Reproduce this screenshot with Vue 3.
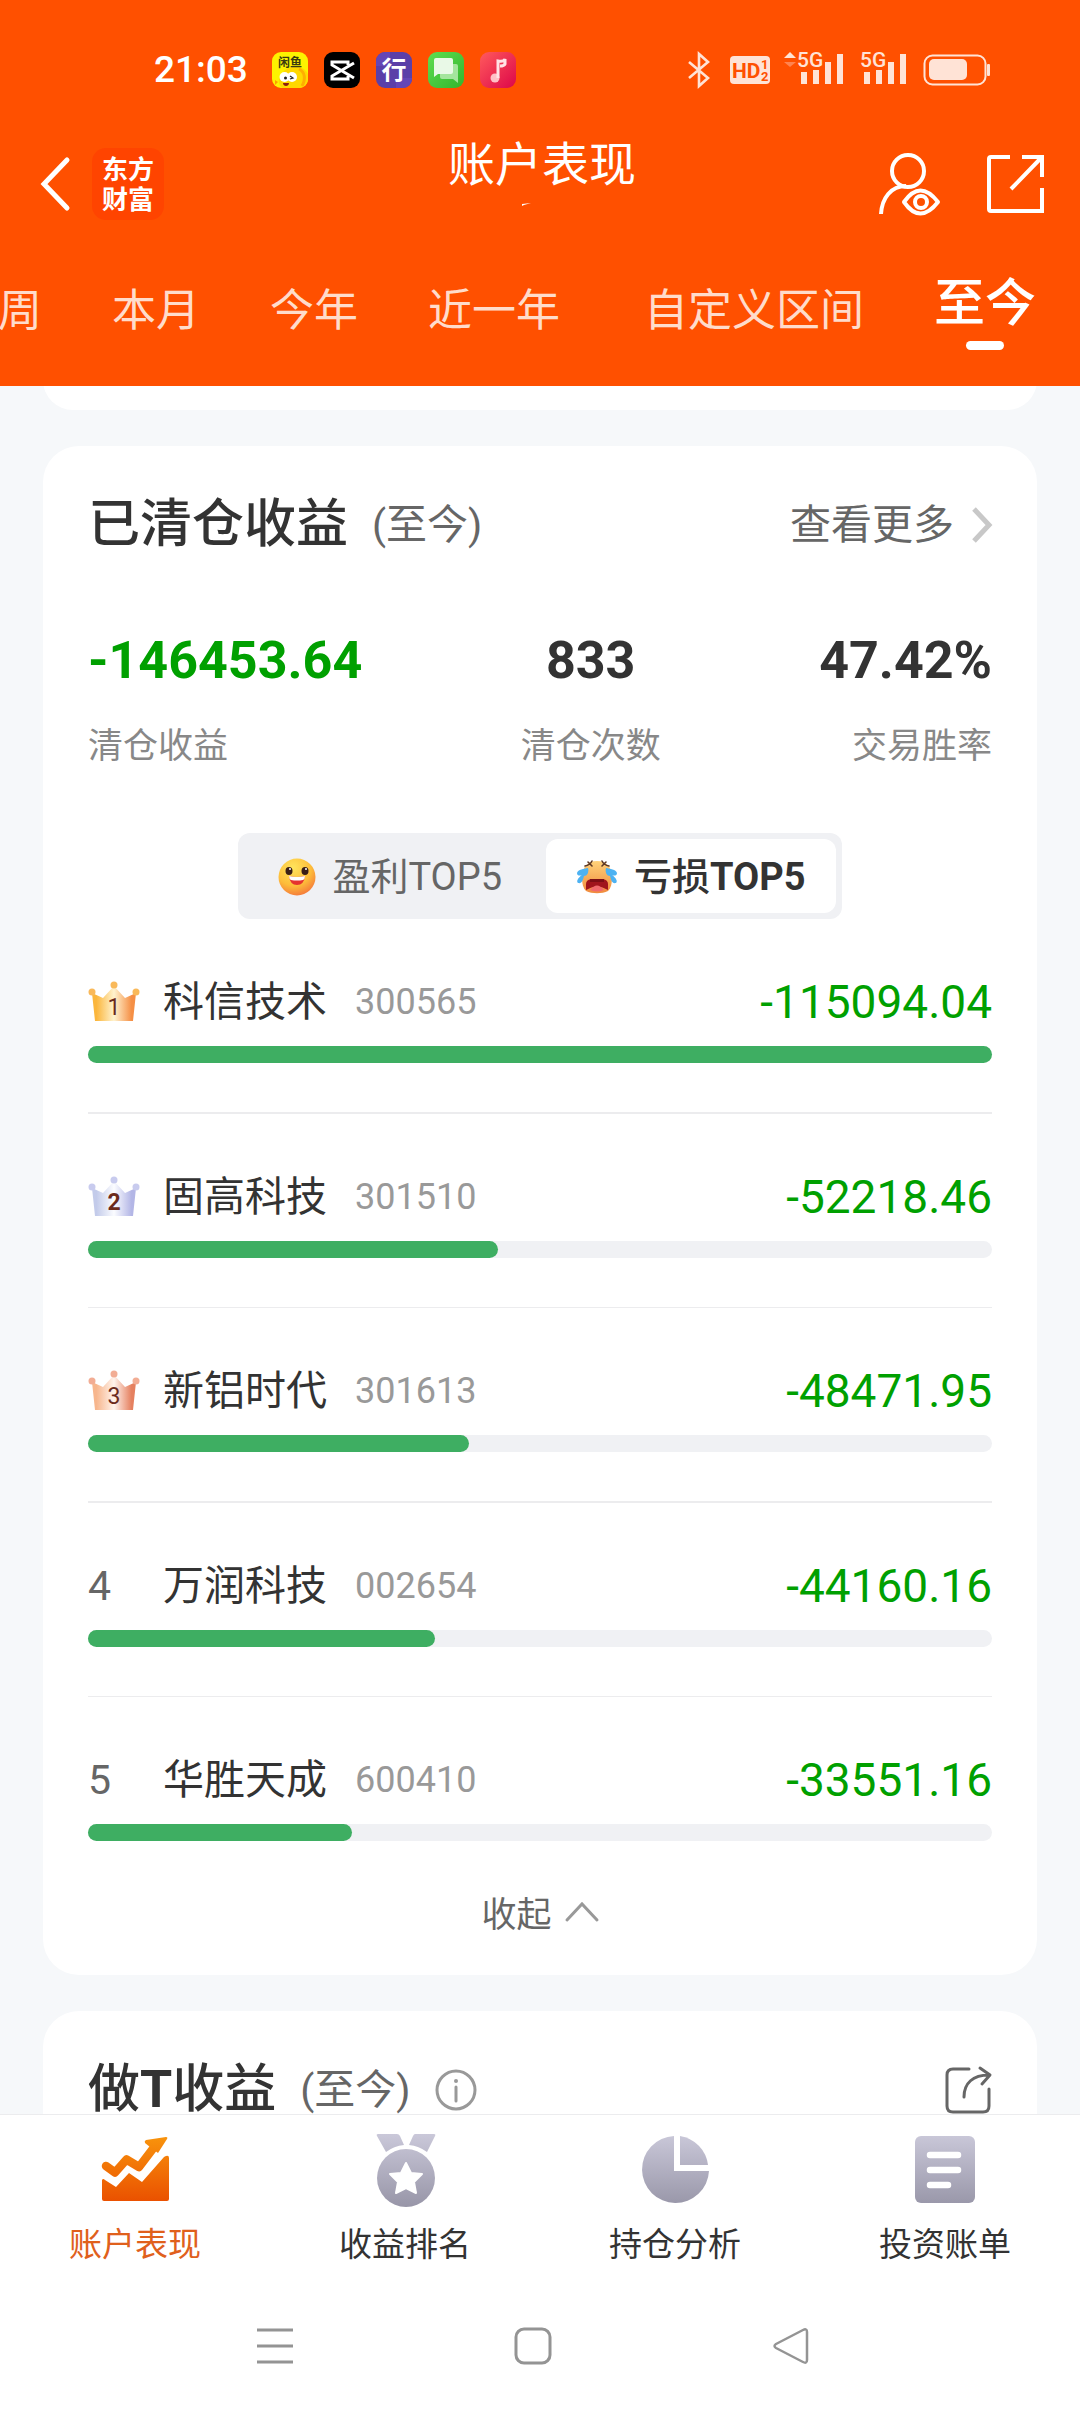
<script setup>
import { ref, computed } from 'vue'

const ranges = [
  { key: 'week', label: '本周' },
  { key: 'month', label: '本月' },
  { key: 'year', label: '今年' },
  { key: 'last', label: '近一年' },
  { key: 'custom', label: '自定义区间' },
  { key: 'all', label: '至今' },
]
const range = ref('all')

const stats = [
  { label: '清仓收益', value: '-146453.64', loss: true },
  { label: '清仓次数', value: '833' },
  { label: '交易胜率', value: '47.42%' },
]

const board = ref('loss')

const losses = [
  { name: '科信技术', code: '300565', amount: -115094.04 },
  { name: '固高科技', code: '301510', amount: -52218.46 },
  { name: '新铝时代', code: '301613', amount: -48471.95 },
  { name: '万润科技', code: '002654', amount: -44160.16 },
  { name: '华胜天成', code: '600410', amount: -33551.16 },
]
const rows = computed(() =>
  losses.map((s, i) => ({
    ...s,
    rank: i + 1,
    text: s.amount.toFixed(2),
    share: (s.amount / losses[0].amount) * 100,
  }))
)

const crowns = [
  { edge: '#fbb63c', mid: '#fff3cf', end: '#f58f45', dot: '#f9b95a' },
  { edge: '#c3cbea', mid: '#fbfcff', end: '#b3b6e6', dot: '#c8cbee' },
  { edge: '#f7b68d', mid: '#fff3ec', end: '#e5805f', dot: '#f2ad94' },
]

const pages = [
  { key: 'performance', label: '账户表现' },
  { key: 'rank', label: '收益排名' },
  { key: 'holding', label: '持仓分析' },
  { key: 'bill', label: '投资账单' },
]
const page = ref('performance')
</script>

<template>
  <div class="app">
    <header class="top">
      <div class="status">
        <div class="status-left">
          <span class="clock">21:03</span>
          <svg class="app-icon" viewBox="0 0 36 36" aria-hidden="true">
            <rect width="36" height="36" rx="9" fill="#fdf200" />
            <path d="M36 22c-2-4-6-7-10-7-9-2-17 5-19 12-1 4 1 7 3 9h17c5 0 9-4 9-9z" fill="#ffd800" />
            <path d="M27 17c6 3 7 10 3 17" fill="none" stroke="#ffae00" stroke-width="3" />
            <path d="M3 28l3 2-3 3z" fill="#ff9d00" />
            <circle cx="12.500" cy="25" r="5" fill="#fff" />
            <circle cx="20" cy="25" r="5" fill="#fff" />
            <circle cx="13.500" cy="26" r="1.500" fill="#222" />
            <path d="M18 24l3 2-3 1" fill="none" stroke="#222" stroke-width="1.200" />
            <path d="M11 31h6c0 4-6 4-6 0z" fill="#8d1d10" />
            <text x="18" y="15" text-anchor="middle" font-size="12" font-weight="700" fill="#3a3a10">闲鱼</text>
          </svg>
          <svg class="app-icon" viewBox="0 0 36 36" aria-hidden="true">
            <rect width="36" height="36" rx="9" fill="#000" />
            <path d="M30 11L8 24v3h16v-3M30 26L8 13v-3h16v3" fill="none" stroke="#fff" stroke-width="3" />
          </svg>
          <svg class="app-icon" viewBox="0 0 36 36" aria-hidden="true">
            <rect width="36" height="36" rx="9" fill="#5b3fa8" />
            <path d="M0 14h14V0H9a9 9 0 0 0-9 9zM20 26h16v1a9 9 0 0 1-9 9h-7z" fill="#6546b6" />
            <text x="18" y="27" text-anchor="middle" font-size="25" font-weight="700" fill="#fff">行</text>
          </svg>
          <svg class="app-icon" viewBox="0 0 36 36" aria-hidden="true">
            <defs>
              <linearGradient id="msg" x1="0" y1="0" x2="1" y2="1">
                <stop offset="0" stop-color="#5fdd51" /><stop offset="1" stop-color="#33b52d" />
              </linearGradient>
            </defs>
            <rect width="36" height="36" rx="9" fill="url(#msg)" />
            <path d="M14 12h14q2 0 2 2v17l-5-4H14q-2 0-2-2V14q0-2 2-2z" fill="#a4e59d" />
            <path d="M8 6h15q2 0 2 2v12q0 2-2 2H10l-4 3V8q0-2 2-2z" fill="#e9f9e7" />
          </svg>
          <svg class="app-icon" viewBox="0 0 36 36" aria-hidden="true">
            <defs>
              <linearGradient id="music" x1="0" y1="0" x2="1" y2="1">
                <stop offset="0" stop-color="#ff5a5c" /><stop offset="1" stop-color="#dd0649" />
              </linearGradient>
            </defs>
            <rect width="36" height="36" rx="9" fill="url(#music)" />
            <circle cx="15" cy="26" r="4.500" fill="#ffc1c6" />
            <path d="M18 26V9q6 1 7-2v5q-1 2-5 2" fill="none" stroke="#ffe3e5" stroke-width="3" />
          </svg>
        </div>
        <svg class="signals" viewBox="0 0 304 36" aria-label="5G 信号">
          <g fill="none" stroke="#ffe3d6" stroke-width="2.600">
            <path d="M1 10l19 16-9 8V2l9 8L1 26" />
            <rect x="236.500" y="3.500" width="61" height="29" rx="8" stroke-width="2" />
          </g>
          <g fill="#ffe3d6">
            <rect x="42" y="4" width="40" height="28" rx="4" />
            <path d="M96 6l6-6 6 6z" />
            <rect x="113" y="20" width="6" height="12" /><rect x="125" y="18" width="6" height="14" />
            <rect x="137" y="10" width="6" height="22" /><rect x="149" y="2" width="6" height="30" />
            <rect x="176" y="20" width="6" height="12" /><rect x="188" y="18" width="6" height="14" />
            <rect x="200" y="10" width="6" height="22" /><rect x="212" y="2" width="6" height="30" />
            <rect x="241" y="7" width="38" height="21" rx="5" />
            <rect x="299" y="12" width="3" height="12" rx="1" />
            <text x="109" y="15" font-size="21" font-weight="500">5G</text>
            <text x="172" y="15" font-size="21" font-weight="500">5G</text>
          </g>
          <path d="M96 10l6 5 6-5z" fill="#ff8450" />
          <g fill="#ff5000" font-weight="700">
            <text x="44" y="26" font-size="21">HD</text>
            <text x="73" y="17" font-size="13">1</text>
            <text x="73" y="29" font-size="13">2</text>
          </g>
        </svg>
      </div>

      <nav class="nav">
        <div class="nav-left">
          <button class="icon-btn" aria-label="返回">
            <svg width="32" height="56" viewBox="0 0 32 56" fill="none" stroke="#fff" stroke-width="5" stroke-linecap="round">
              <path d="M27 4L4 28l23 24" />
            </svg>
          </button>
          <a class="logo" href="#home">东方<br>财富</a>
        </div>
        <div class="title-box">
          <h1 class="title">账户表现</h1>
          <svg class="tick" viewBox="0 0 10 4" aria-hidden="true"><path d="M0 1l9-1-7 2-2 1z" fill="#fff" /></svg>
        </div>
        <div class="nav-right">
          <button class="icon-btn" aria-label="账户查看">
            <svg width="64" height="64" viewBox="0 0 64 64" fill="none" stroke="#fff" stroke-width="4">
              <circle cx="31" cy="19" r="16" />
              <path d="M4 62C5 46 14 34 29 34" />
              <path d="M27 50q16-23 34 0q-18 23-34 0z" stroke-linejoin="round" />
              <circle cx="44" cy="50" r="6" />
            </svg>
          </button>
          <button class="icon-btn" aria-label="分享">
            <svg width="58" height="60" viewBox="0 0 58 60" fill="none" stroke="#fff" stroke-width="4">
              <path d="M24 3H5q-2 0-2 2v50q0 2 2 2h51V34" />
              <path d="M36 3h20v20M55 4L25 35" />
            </svg>
          </button>
        </div>
      </nav>

      <div class="ranges">
        <button
          v-for="r in ranges"
          :key="r.key"
          class="range"
          :class="{ active: range === r.key, custom: r.key === 'custom' }"
          @click="range = r.key"
        >{{ r.label }}</button>
      </div>
    </header>

    <main class="content">
      <section class="card card-prev"></section>

      <section class="card">
        <div class="card-head">
          <h2 class="card-title">已清仓收益</h2>
          <span class="period">(至今)</span>
          <a class="more" href="#more">
            查看更多
            <svg width="20" height="36" viewBox="0 0 20 36" fill="none" stroke="#c8c8c8" stroke-width="5">
              <path d="M2 2l15 16L2 34" />
            </svg>
          </a>
        </div>

        <div class="stats">
          <div v-for="s in stats" :key="s.label" class="stat">
            <strong class="stat-value" :class="{ loss: s.loss }">{{ s.value }}</strong>
            <span class="stat-label">{{ s.label }}</span>
          </div>
        </div>

        <div class="switch">
          <button class="switch-item" :class="{ on: board === 'gain' }" @click="board = 'gain'">
            <svg width="42" height="40" viewBox="0 0 42 40" aria-hidden="true">
              <defs>
                <radialGradient id="smile" cx=".4" cy=".25" r=".8">
                  <stop offset="0" stop-color="#ffe45c" /><stop offset=".6" stop-color="#fdbd3a" /><stop offset="1" stop-color="#f4743a" />
                </radialGradient>
              </defs>
              <ellipse cx="23" cy="20" rx="18.500" ry="18.500" fill="url(#smile)" />
              <ellipse cx="15" cy="14" rx="3.500" ry="4" fill="#3a1e16" />
              <ellipse cx="31" cy="14" rx="3.500" ry="4" fill="#3a1e16" />
              <circle cx="16" cy="12" r="1" fill="#fff" /><circle cx="32" cy="12" r="1" fill="#fff" />
              <path d="M15 19q8 2 16 0-1 9-8 9t-8-9z" fill="#e5322e" />
              <path d="M15 19q8 2 16 0 0 3-2 4-6 1-12 0-2-1-2-4z" fill="#fff" />
            </svg>
            <span>盈利TOP5</span>
          </button>
          <button class="switch-item" :class="{ on: board === 'loss' }" @click="board = 'loss'">
            <svg width="42" height="40" viewBox="0 0 42 40" aria-hidden="true">
              <defs>
                <linearGradient id="cry" x1="0" y1="0" x2="0" y2="1">
                  <stop offset="0" stop-color="#ffd27a" /><stop offset="1" stop-color="#f08a3c" />
                </linearGradient>
              </defs>
              <path d="M21 4c10 0 15 7 15 16 0 6-1 11-4 14-6 3-16 3-22 0-3-3-4-8-4-14C6 11 11 4 21 4z" fill="url(#cry)" />
              <path d="M9 9q5-1 7-5M33 9q-5-1-7-5M12 5l4 4M30 5l-4 4" fill="none" stroke="#5d3826" stroke-width="1.600" stroke-linecap="round" />
              <path d="M10 33V27q0-4 5-5h12q5 1 5 5v6q-11-7-22 0z" fill="#a0141c" />
              <path d="M14 33q7-9 14 0-7 3-14 0z" fill="#f0696d" />
              <path d="M14 22h14v3H14z" fill="#7c0d14" />
              <path d="M12 11c-4 1-10 1-11 5 0 3 3 3 5 2-4 3-6 6-4 8 4 1 5-3 6-7 4 0 5-5 4-8zM30 11c4 1 10 1 11 5 0 3-3 3-5 2 4 3 6 6 4 8-4 1-5-3-6-7-4 0-5-5-4-8z" fill="#4db2f2" />
            </svg>
            <span>亏损<b>TOP5</b></span>
          </button>
        </div>

        <ol class="list">
          <li v-for="s in rows" :key="s.code" class="row">
            <div class="row-line">
              <span class="rank">
                <svg v-if="s.rank <= 3" width="52" height="42" viewBox="0 0 52 42">
                  <defs>
                    <linearGradient :id="'crown' + s.rank">
                      <stop offset=".1" :stop-color="crowns[s.rank - 1].edge" />
                      <stop offset=".5" :stop-color="crowns[s.rank - 1].mid" />
                      <stop offset=".9" :stop-color="crowns[s.rank - 1].end" />
                    </linearGradient>
                  </defs>
                  <path d="M4 12l11 5L26 5l11 12 11-5-3 28H7z" :fill="`url(#crown${s.rank})`" />
                  <circle cx="4" cy="11" r="3.500" :fill="crowns[s.rank - 1].dot" />
                  <circle cx="26" cy="4" r="3.500" :fill="crowns[s.rank - 1].dot" />
                  <circle cx="48" cy="11" r="3.500" :fill="crowns[s.rank - 1].dot" />
                  <text x="26" y="34" text-anchor="middle" font-size="23" :font-weight="s.rank === 2 ? 700 : 400" fill="#6b2a1c">{{ s.rank }}</text>
                </svg>
                <template v-else>{{ s.rank }}</template>
              </span>
              <span class="name">{{ s.name }}</span>
              <span class="code">{{ s.code }}</span>
              <span class="amount">{{ s.text }}</span>
            </div>
            <div class="bar"><div class="fill" :style="{ width: s.share + '%' }"></div></div>
          </li>
        </ol>

        <button class="collapse">
          收起
          <svg width="34" height="22" viewBox="0 0 34 22" fill="none" stroke="#999" stroke-width="3" stroke-linecap="round">
            <path d="M2 19L17 3l15 16" />
          </svg>
        </button>
      </section>

      <section class="card">
        <div class="card-head">
          <h2 class="card-title">做<b>T</b>收益</h2>
          <span class="period">(至今)</span>
          <button class="icon-btn info" aria-label="说明">
            <svg width="42" height="42" viewBox="0 0 42 42" fill="none" stroke="#999" stroke-width="3">
              <circle cx="21" cy="21" r="19" />
              <path d="M21 18v14" stroke-linecap="round" />
              <circle cx="21" cy="12" r="2" fill="#999" stroke="none" />
            </svg>
          </button>
          <button class="icon-btn share" aria-label="分享">
            <svg width="47" height="48" viewBox="0 0 47 48" fill="none" stroke="#666" stroke-width="3" stroke-linecap="round" stroke-linejoin="round">
              <path d="M24 3H8Q2 3 2 9v31q0 6 6 6h30q6 0 6-6V23" />
              <path d="M19 31C19 17 28 9 44 9M35 2l10 7-8 9" />
            </svg>
          </button>
        </div>
      </section>
    </main>

    <footer class="bottom">
      <nav class="pages">
        <a
          v-for="p in pages"
          :key="p.key"
          class="page"
          :class="{ current: page === p.key }"
          :href="'#' + p.key"
          @click.prevent="page = p.key"
        >
          <svg class="page-icon" viewBox="0 0 76 76" aria-hidden="true">
            <defs>
              <linearGradient id="hot" gradientUnits="userSpaceOnUse" x1="38" y1="5" x2="38" y2="70">
                <stop offset="0" stop-color="#f8930c" /><stop offset="1" stop-color="#ea5000" />
              </linearGradient>
              <linearGradient id="cool" gradientUnits="userSpaceOnUse" x1="38" y1="2" x2="38" y2="74">
                <stop offset="0" stop-color="#cac8d9" /><stop offset="1" stop-color="#9896a8" />
              </linearGradient>
            </defs>
            <g v-if="p.key === 'performance'">
              <path d="M5 48q1-2 3 0l11 7 13-14 13 9 22-25q5-3 5 1v41q0 2-2 2H7q-2 0-2-2z" fill="url(#hot)" />
              <path d="M9 34l9 6.500 11.500-13L42 35l16-21" fill="none" stroke="url(#hot)" stroke-width="8.500" stroke-linecap="round" stroke-linejoin="round" />
              <path d="M49 8l20-3q2 0 1 2L61 21l-8-6-5-4q-1-2 1-3z" fill="url(#hot)" />
            </g>
            <g v-else-if="p.key === 'rank'" fill="url(#cool)">
              <path d="M11 2h19q2 0 3 2l4 9q-10 1-18 7L10 4q-1-2 1-2zM48 2h19q2 0 1 2l-8 16q-8-6-18-7l4-9q1-2 2-2z" />
              <circle cx="39" cy="46" r="29" />
              <path d="M39 31l5 10 11 1-8 8 2 11-10-5-10 5 2-11-8-8 11-1z" fill="#fff" stroke="#fff" stroke-width="2" stroke-linejoin="round" />
            </g>
            <g v-else-if="p.key === 'holding'" fill="url(#cool)">
              <path d="M37 4A33.500 33.500 0 1 0 72 39H37z" />
              <path d="M43 4A33.500 33.500 0 0 1 71 33H43z" />
            </g>
            <g v-else>
              <rect x="8" y="4" width="60" height="67" rx="6" fill="url(#cool)" />
              <path d="M23 23h28M23 38h28M23 53h18" stroke="#fff" stroke-width="6.500" stroke-linecap="round" />
            </g>
          </svg>
          {{ p.label }}
        </a>
      </nav>
      <div class="system">
        <button class="icon-btn" aria-label="最近任务">
          <svg width="38" height="38" viewBox="0 0 38 38" stroke="#949494" stroke-width="3"><path d="M1 3h36M1 19h36M1 35h36" /></svg>
        </button>
        <button class="icon-btn" aria-label="主屏幕">
          <svg width="38" height="38" viewBox="0 0 38 38" fill="none" stroke="#949494" stroke-width="3"><rect x="2" y="2" width="34" height="34" rx="8" /></svg>
        </button>
        <button class="icon-btn" aria-label="系统返回">
          <svg width="38" height="38" viewBox="0 0 38 38" fill="none" stroke="#949494" stroke-width="2.500" stroke-linejoin="round"><path d="M31 3q4-2 4 2v28q0 4-4 2L4 21q-3-2 0-4z" /></svg>
        </button>
      </div>
    </footer>
  </div>
</template>

<style>
body {
  margin: 0;
  background: #f6f8fa;
}
</style>

<style scoped>
.app {
  display: flex;
  flex-direction: column;
  height: 100vh;
  overflow: hidden;
  color: #333;
  background: #f6f8fa;
  font-family: Roboto, "Noto Sans CJK SC", sans-serif;
}
button {
  padding: 0;
  border: 0;
  background: none;
  color: inherit;
  font: inherit;
  cursor: pointer;
}
a {
  color: inherit;
  text-decoration: none;
}
svg {
  display: block;
  flex: none;
  overflow: visible;
}
h1,
h2 {
  margin: 0;
}
b {
  font-weight: 700;
}
.icon-btn {
  display: flex;
  align-items: center;
}

.top {
  flex: none;
  background: #ff5000;
  color: #fff;
}
.status {
  display: flex;
  justify-content: space-between;
  align-items: center;
  padding: 52px 88px 47px 154px;
}
.status-left {
  display: flex;
  align-items: center;
  gap: 16px;
}
.clock {
  margin-right: 8px;
  font-size: 37px;
  line-height: 36px;
  font-weight: 500;
}
.app-icon {
  width: 36px;
  height: 36px;
}
.signals {
  width: 304px;
  height: 36px;
}

.nav {
  display: grid;
  grid-template-columns: 1fr auto 1fr;
  align-items: center;
  padding: 0 36px 0 40px;
}
.nav-left {
  display: flex;
  align-items: center;
  gap: 20px;
}
.logo {
  box-sizing: border-box;
  width: 72px;
  height: 72px;
  padding-top: 7px;
  border-radius: 14px;
  background: #ff4400;
  font-size: 26px;
  line-height: 30px;
  font-weight: 700;
  text-align: center;
}
.title-box {
  padding-bottom: 26px;
}
.title {
  font-size: 47px;
  line-height: 60px;
  font-weight: 400;
}
.tick {
  width: 10px;
  height: 4px;
  margin: 8px 0 0 74px;
}
.nav-right {
  display: flex;
  justify-content: flex-end;
  align-items: center;
  gap: 45px;
}

.ranges {
  display: flex;
  justify-content: flex-end;
  align-items: center;
  gap: 70px;
  overflow: hidden;
  padding: 39px 44px 36px 0;
}
.range {
  flex: none;
  color: #ffdccb;
  font-size: 44px;
  line-height: 60px;
  white-space: nowrap;
}
.range.custom {
  padding-left: 14px;
}
.range.active {
  color: #fff;
  font-size: 51px;
  line-height: 64px;
  font-weight: 500;
}
.range.active::after {
  content: "";
  display: block;
  width: 38px;
  height: 9px;
  margin: 5px auto 0;
  border-radius: 5px;
  background: #fff;
}

.content {
  flex: 1;
  min-height: 0;
  overflow: hidden;
  padding: 0 43px;
}
.card {
  margin-bottom: 36px;
  padding: 49px 45px 41px;
  border-radius: 36px;
  background: #fff;
}
.card-prev {
  height: 60px;
  margin-top: -36px;
  padding: 0;
}
.card-head {
  display: flex;
  align-items: center;
  height: 60px;
}
.card-title {
  font-size: 52px;
  line-height: 60px;
  font-weight: 500;
}
.period {
  margin-left: 24px;
  color: #666;
  font-size: 41px;
  line-height: 60px;
}
.more {
  display: flex;
  align-items: center;
  gap: 18px;
  margin-left: auto;
  color: #666;
  font-size: 41px;
  line-height: 60px;
}
.info {
  margin-left: 24px;
}
.share {
  margin-left: auto;
}

.stats {
  display: flex;
  justify-content: space-between;
  margin-top: 76px;
}
.stat {
  display: flex;
  flex-direction: column;
  align-items: center;
  gap: 32px;
}
.stat:first-child {
  align-items: flex-start;
}
.stat:last-child {
  align-items: flex-end;
}
.stat-value {
  font-size: 52px;
  line-height: 60px;
  font-weight: 700;
}
.stat-value.loss {
  color: #00a000;
}
.stat-label {
  color: #888;
  font-size: 35px;
  line-height: 48px;
}

.switch {
  display: flex;
  gap: 14px;
  width: fit-content;
  margin: 62px auto 0;
  padding: 6px;
  border-radius: 12px;
  background: #f0f1f4;
}
.switch-item {
  display: flex;
  align-items: center;
  gap: 16px;
  padding: 2px 30px 0;
  border-radius: 12px;
  color: #666;
  font-size: 38px;
  line-height: 72px;
}
.switch-item.on {
  background: #fff;
  color: #333;
  font-weight: 500;
}

.list {
  margin: 0;
  padding: 0;
  list-style: none;
}
.row {
  padding: 53px 0 49px;
  border-bottom: 1px solid #ececee;
}
.row:nth-child(odd) {
  border-bottom-width: 2px;
}
.row:last-child {
  border-bottom: 0;
}
.row-line {
  display: flex;
  align-items: center;
  height: 60px;
}
.rank {
  flex: none;
  width: 75px;
  color: #666;
  font-size: 41px;
}
.name {
  font-size: 41px;
  line-height: 60px;
}
.code {
  margin-left: 28px;
  color: #999;
  font-size: 36px;
}
.amount {
  margin-left: auto;
  color: #00a000;
  font-size: 46px;
}
.bar {
  height: 17px;
  margin-top: 14px;
  border-radius: 9px;
  background: #f0f1f4;
}
.fill {
  height: 100%;
  border-radius: 9px;
  background: #3eae62;
}
.collapse {
  display: flex;
  align-items: center;
  gap: 13px;
  margin: 0 auto;
  color: #666;
  font-family: "Noto Sans CJK SC", sans-serif;
  font-size: 35px;
  line-height: 44px;
}

.bottom {
  flex: none;
  border-top: 1px solid #ececee;
  background: #fff;
}
.pages {
  display: grid;
  grid-template-columns: repeat(4, 1fr);
  padding-top: 17px;
}
.page {
  display: flex;
  flex-direction: column;
  align-items: center;
  gap: 13px;
  font-size: 33px;
  line-height: 48px;
}
.page.current {
  color: #e0601c;
}
.page-icon {
  width: 76px;
  height: 76px;
}
.system {
  display: flex;
  justify-content: space-between;
  padding: 58px 270px 47px 256px;
}
</style>
